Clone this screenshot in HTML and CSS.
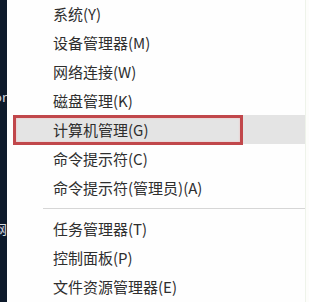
FILE: index.html
```html
<html>
<head>
<meta charset="utf-8">
<link rel="stylesheet" href="styles.css">
</head>
<body>
<div class="screen">
  <div class="desktop">
    <span class="peek peek-top">or</span>
    <span class="peek peek-bottom">网</span>
  </div>
  <div class="menu">
    <div class="item">系统(Y)</div>
    <div class="item">设备管理器(M)</div>
    <div class="item">网络连接(W)</div>
    <div class="item">磁盘管理(K)</div>
    <div class="item active">计算机管理(G)<span class="mark"></span></div>
    <div class="item">命令提示符(C)</div>
    <div class="item">命令提示符(管理员)(A)</div>
    <div class="sep"></div>
    <div class="item">任务管理器(T)</div>
    <div class="item">控制面板(P)</div>
    <div class="item">文件资源管理器(E)</div>
  </div>
</div>
</body>
</html>
```

FILE: styles.css
```css
* {
  box-sizing: border-box;
  margin: 0;
  padding: 0;
}

body {
  background: #fdfdfb;
  font-family: "Noto Sans CJK SC", "Noto Sans", sans-serif;
  font-size: 15px;
  color: #2e2e2e;
  overflow: hidden;
}

.screen {
  display: flex;
  width: 309px;
  height: 302px;
}

.desktop {
  width: 7px;
  flex: none;
  background: #0d1a2b;
  display: flex;
  flex-direction: column;
  align-items: flex-end;
  overflow: hidden;
  color: #d8dce2;
  font-size: 13px;
  line-height: 16px;
}

.peek {
  white-space: nowrap;
}

.peek-top {
  margin-top: 89px;
}

.peek-bottom {
  margin-top: 116px;
}

.menu {
  width: 299px;
  flex: none;
  background: #fefefe;
  border-right: 1px solid #eef3ea;
  margin-top: -1px;
}

.item {
  position: relative;
  height: 29px;
  line-height: 29px;
  padding-left: 46px;
  white-space: nowrap;
}

.item.active {
  background: #e4e4e4;
  margin-left: 6px;
  padding-left: 40px;
}

.mark {
  position: absolute;
  left: 0;
  top: 0;
  width: 230px;
  height: 30px;
  border: 3px solid #c1474b;
  box-shadow: inset 0 0 2px #f2b5b5;
}

.sep {
  height: 1px;
  margin: 6px 0 5px 36px;
  background: #d6d6d6;
}
```
